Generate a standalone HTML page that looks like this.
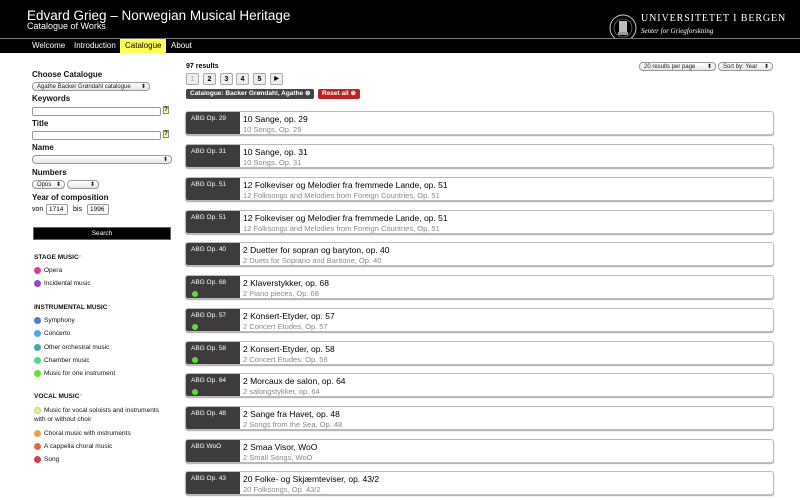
<!DOCTYPE html>
<html><head><meta charset="utf-8"><style>
*{box-sizing:border-box;margin:0;padding:0}
body{width:800px;height:500px;overflow:hidden;background:#fff;font-family:"Liberation Sans",sans-serif;position:relative;color:#000}
.a{position:absolute;white-space:nowrap}
.hdr{left:0;top:0;width:800px;height:38px;background:#000}
.nav{left:0;top:38px;width:800px;height:15px;background:#000;border-top:1px solid #777}
.nv{top:39px;height:14px;font-size:8px;color:#fff;line-height:14px;padding:0 5px}
.lbl{font-size:8px;font-weight:bold;color:#111}
.sel{border:1px solid #999;border-radius:4px;background:linear-gradient(#fff,#e6e6e6);font-size:6px;line-height:8px;padding-left:4px;color:#222}
.sel:after{content:"⬍";position:absolute;right:3px;top:0;font-size:6px}
.inp{border:1px solid #999;border-radius:2px;background:#fff;font-size:6.5px;padding-left:2px;line-height:8px}
.q{width:6px;height:8px;background:#ffff99;border:1px solid #888;font-size:6px;font-weight:bold;text-align:center;line-height:7px}
.leg{font-size:6.5px;color:#111;left:44px}
.dot{width:7px;height:7px;border-radius:50%;left:34px}
.sec{font-size:6.5px;font-weight:bold;left:34px;color:#111}
.pg{top:73px;width:13px;height:12px;border:1px solid #aaa;border-radius:2px;background:#eee;font-size:7px;text-align:center;line-height:11px;font-weight:bold}
.card{left:185px;width:589px;height:24px;border:1px solid #bbb;border-radius:3px;background:#fff;box-shadow:0 1px 1px #aaa;overflow:hidden}
.card .l{position:absolute;left:0;top:0;width:54px;height:24px;background:#3d3b3c;color:#fff;font-size:6.5px;padding:3px 0 0 5px}
.card .t{position:absolute;left:57px;top:2px;font-size:8.5px;color:#000}
.card .s{position:absolute;left:57px;top:13px;font-size:7.5px;color:#888}
.card .g{position:absolute;left:6px;top:15px;width:6px;height:6px;border-radius:50%;background:#5fdc3c}
</style></head><body>
<div class="a hdr"></div>
<div class="a" style="left:27px;top:8px;font-size:13.5px;color:#fff">Edvard Grieg – Norwegian Musical Heritage</div>
<div class="a" style="left:27px;top:21px;font-size:9px;color:#fff">Catalogue of Works</div>
<div class="a" style="left:597px;top:38px;width:16px;height:1px;background:#999"></div>
<div class="a" style="left:783px;top:38px;width:17px;height:1px;background:#999"></div>
<svg class="a" style="left:608px;top:13px" width="30" height="30"><circle cx="15" cy="15" r="13" fill="none" stroke="#ccc" stroke-width="1"/><circle cx="15" cy="15" r="9" fill="none" stroke="#888" stroke-width="0.6"/><rect x="11" y="8" width="8" height="11" fill="#bbb"/><rect x="10" y="19" width="10" height="3" fill="#999"/></svg>
<div class="a" style="left:641px;top:13px;font-family:'Liberation Serif',serif;font-size:10px;color:#fff;letter-spacing:0.9px">UNIVERSITETET I BERGEN</div>
<div class="a" style="left:641px;top:27px;font-family:'Liberation Serif',serif;font-style:italic;font-size:7px;color:#fff">Senter for Griegforskning</div>
<div class="a nav"></div>
<div class="a nv" style="left:27px">Welcome</div>
<div class="a nv" style="left:69px">Introduction</div>
<div class="a nv" style="left:120px;background:#ffff55;color:#000">Catalogue</div>
<div class="a nv" style="left:166px">About</div>

<div class="a lbl" style="left:32px;top:70px">Choose Catalogue</div>
<div class="a sel" style="left:32px;top:82px;width:118px;height:9px">Agathe Backer Grøndahl catalogue</div>
<div class="a lbl" style="left:32px;top:94px">Keywords</div>
<div class="a inp" style="left:32px;top:107px;width:129px;height:9px"></div>
<div class="a q" style="left:163px;top:106px">?</div>
<div class="a lbl" style="left:32px;top:119px">Title</div>
<div class="a inp" style="left:32px;top:131px;width:129px;height:9px"></div>
<div class="a q" style="left:163px;top:130px">?</div>
<div class="a lbl" style="left:32px;top:143px">Name</div>
<div class="a sel" style="left:32px;top:155px;width:140px;height:9px"></div>
<div class="a lbl" style="left:32px;top:168px">Numbers</div>
<div class="a sel" style="left:32px;top:180px;width:33px;height:9px">Opus</div>
<div class="a sel" style="left:67px;top:180px;width:32px;height:9px"></div>
<div class="a lbl" style="left:32px;top:193px">Year of composition</div>
<div class="a" style="left:32px;top:206px;font-size:7px">von</div>
<div class="a inp" style="left:46px;top:204px;width:22px;height:11px;line-height:9px">1714</div>
<div class="a" style="left:73px;top:206px;font-size:7px">bis</div>
<div class="a inp" style="left:87px;top:204px;width:22px;height:11px;line-height:9px">1996</div>
<div class="a" style="left:33px;top:227px;width:138px;height:13px;background:#000;border:1px solid #666;color:#fff;font-size:6.5px;text-align:center;line-height:11px">Search</div>

<div class="a sec" style="top:254px">STAGE MUSIC<span style="color:#aaa;font-weight:normal">^</span></div>
<div class="a dot" style="top:267px;background:#dd3b99"></div><div class="a leg" style="top:267px">Opera</div>
<div class="a dot" style="top:280px;background:#8b4ad2"></div><div class="a leg" style="top:280px">Incidental music</div>
<div class="a sec" style="top:304px">INSTRUMENTAL MUSIC<span style="color:#aaa;font-weight:normal">^</span></div>
<div class="a dot" style="top:317px;background:#4f79e0"></div><div class="a leg" style="top:317px">Symphony</div>
<div class="a dot" style="top:330px;background:#4ea4e8"></div><div class="a leg" style="top:330px">Concerto</div>
<div class="a dot" style="top:344px;background:#48a8a8"></div><div class="a leg" style="top:344px">Other orchestral music</div>
<div class="a dot" style="top:357px;background:#4fdc8a"></div><div class="a leg" style="top:357px">Chamber music</div>
<div class="a dot" style="top:370px;background:#6cdc3a"></div><div class="a leg" style="top:370px">Music for one instrument</div>
<div class="a sec" style="top:393px">VOCAL MUSIC<span style="color:#aaa;font-weight:normal">^</span></div>
<div class="a dot" style="top:407px;background:#f0f070;border:1px solid #cc9"></div><div class="a leg" style="top:407px">Music for vocal soloists and instruments</div>
<div class="a leg" style="top:416px;left:34px">with or without choir</div>
<div class="a dot" style="top:430px;background:#e8a050"></div><div class="a leg" style="top:430px">Choral music with instruments</div>
<div class="a dot" style="top:443px;background:#e06a48"></div><div class="a leg" style="top:443px">A cappella choral music</div>
<div class="a dot" style="top:456px;background:#d83a50"></div><div class="a leg" style="top:456px">Song</div>

<div class="a" style="left:186px;top:63px;font-size:7px;font-weight:bold">97 results</div>
<div class="a pg" style="left:186px;color:#aaa;font-weight:normal">1</div>
<div class="a pg" style="left:203px">2</div>
<div class="a pg" style="left:220px">3</div>
<div class="a pg" style="left:236px">4</div>
<div class="a pg" style="left:253px">5</div>
<div class="a pg" style="left:270px;font-size:6px">▶</div>
<div class="a" style="left:186px;top:89px;height:10px;padding:0 4px;background:#444;border-radius:2px;color:#fff;font-size:6.5px;line-height:10px;font-weight:bold">Catalogue: Backer Grøndahl, Agathe ⊗</div>
<div class="a" style="left:318px;top:89px;height:10px;padding:0 4px;background:#b22;border-radius:2px;color:#fff;font-size:6.5px;line-height:10px;font-weight:bold">Reset all ⊗</div>
<div class="a sel" style="left:639px;top:62px;width:77px;height:9px">20 results per page</div>
<div class="a sel" style="left:718px;top:62px;width:55px;height:9px">Sort by: Year</div>

<div class="a card" style="top:111px"><div class="l">ABG Op. 29</div><div class="t">10 Sange, op. 29</div><div class="s">10 Songs, Op. 29</div></div>
<div class="a card" style="top:144px"><div class="l">ABG Op. 31</div><div class="t">10 Sange, op. 31</div><div class="s">10 Songs, Op. 31</div></div>
<div class="a card" style="top:177px"><div class="l">ABG Op. 51</div><div class="t">12 Folkeviser og Melodier fra fremmede Lande, op. 51</div><div class="s">12 Folksongs and Melodies from Foreign Countries, Op. 51</div></div>
<div class="a card" style="top:210px"><div class="l">ABG Op. 51</div><div class="t">12 Folkeviser og Melodier fra fremmede Lande, op. 51</div><div class="s">12 Folksongs and Melodies from Foreign Countries, Op. 51</div></div>
<div class="a card" style="top:242px"><div class="l">ABG Op. 40</div><div class="t">2 Duetter for sopran og baryton, op. 40</div><div class="s">2 Duets for Soprano and Baritone, Op. 40</div></div>
<div class="a card" style="top:275px"><div class="l">ABG Op. 68<div class="g"></div></div><div class="t">2 Klaverstykker, op. 68</div><div class="s">2 Piano pieces, Op. 68</div></div>
<div class="a card" style="top:308px"><div class="l">ABG Op. 57<div class="g"></div></div><div class="t">2 Konsert-Etyder, op. 57</div><div class="s">2 Concert Etudes, Op. 57</div></div>
<div class="a card" style="top:341px"><div class="l">ABG Op. 58<div class="g"></div></div><div class="t">2 Konsert-Etyder, op. 58</div><div class="s">2 Concert Etudes, Op. 58</div></div>
<div class="a card" style="top:373px"><div class="l">ABG Op. 64<div class="g"></div></div><div class="t">2 Morcaux de salon, op. 64</div><div class="s">2 salongstykker, op. 64</div></div>
<div class="a card" style="top:406px"><div class="l">ABG Op. 48</div><div class="t">2 Sange fra Havet, op. 48</div><div class="s">2 Songs from the Sea, Op. 48</div></div>
<div class="a card" style="top:439px"><div class="l">ABG WoO</div><div class="t">2 Smaa Visor, WoO</div><div class="s">2 Small Songs, WoO</div></div>
<div class="a card" style="top:471px"><div class="l">ABG Op. 43</div><div class="t">20 Folke- og Skjæmteviser, op. 43/2</div><div class="s">20 Folksongs, Op. 43/2</div></div>
</body></html>
